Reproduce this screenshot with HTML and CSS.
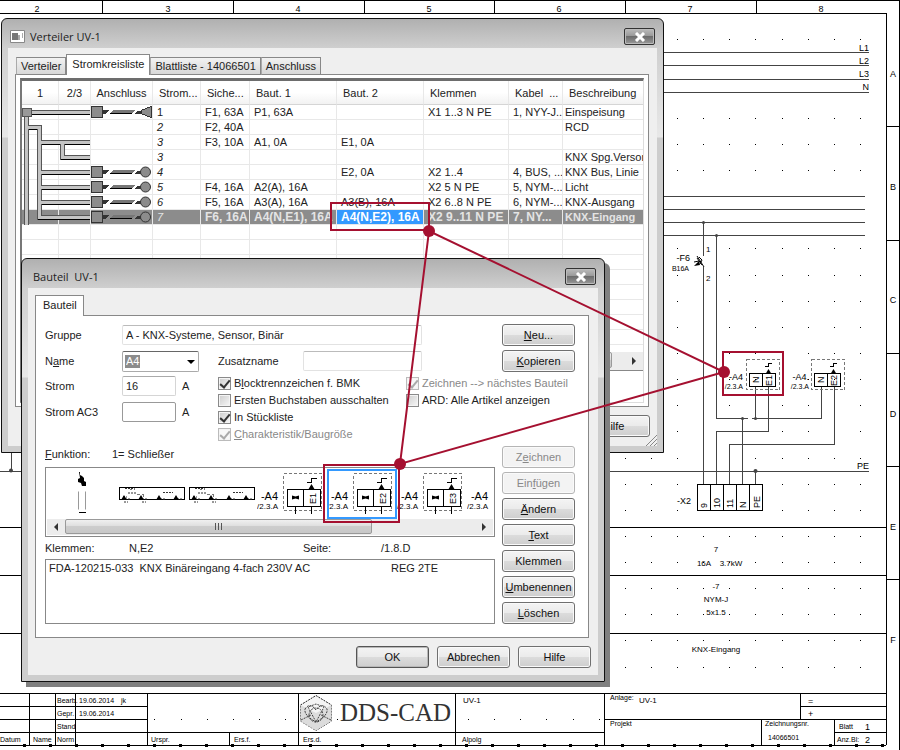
FILE: index.html
```
<!DOCTYPE html>
<html lang="de">
<head>
<meta charset="utf-8">
<title>Verteiler UV-1</title>
<link rel="stylesheet" href="styles.css">
</head>
<body>
<main class="desktop">

<svg class="drawing" viewBox="0 0 900 750" width="900" height="750" role="img" aria-label="Stromlaufplan">
  <defs>
    <path id="dots" class="dot" d="M625 0h1M651 0h1M677 0h1M703 0h1M729 0h1M755 0h1M782 0h1M808 0h1M834 0h1M860 0h1"/>
    <g id="sensor">
      <rect class="dash" x="0.5" y="0.5" width="33" height="30"/>
      <path class="ink" d="M3.5 14.5h26v13h-26zM16.500 14.500v13M19 7.500h3.500v-3h3"/>
      <path d="M22.500 10l3 5h-6z"/>
    </g>
  </defs>

  <!-- sheet frame -->
  <path class="ink" d="M0 .5H899.500V750M0 13.500H886.500V745M102.500 0V13M233.500 0V13M364.500 0V13M494.500 0V13M625.500 0V13M756.500 0V13M886 126.500H899M886 240.500H899M886 353.500H899M886 466.500H899M886 579.500H899M0 527.500H886M0 575.500H886M0 633.500H886"/>
  <g class="t9 mid">
    <text x="37" y="12">2</text><text x="168" y="12">3</text><text x="298" y="12">4</text><text x="429" y="12">5</text><text x="559" y="12">6</text><text x="690" y="12">7</text><text x="821" y="12">8</text>
    <text x="893" y="77">A</text><text x="893" y="190">B</text><text x="893" y="303">C</text><text x="893" y="417">D</text><text x="893" y="530">E</text><text x="893" y="643">F</text>
  </g>

  <!-- grid dots -->
  <use href="#dots" y="39.500"/><use href="#dots" y="118.500"/><use href="#dots" y="144.500"/><use href="#dots" y="170.500"/><use href="#dots" y="248.500"/><use href="#dots" y="275.500"/><use href="#dots" y="301.500"/><use href="#dots" y="327.500"/><use href="#dots" y="353.500"/><use href="#dots" y="379.500"/><use href="#dots" y="405.500"/><use href="#dots" y="431.500"/><use href="#dots" y="458.500"/><use href="#dots" y="484.500"/><use href="#dots" y="510.500"/><use href="#dots" y="536.500"/><use href="#dots" y="562.500"/><use href="#dots" y="588.500"/><use href="#dots" y="614.500"/><use href="#dots" y="640.500"/><use href="#dots" y="667.500"/>

  <!-- wiring -->
  <path class="wire" d="M660 52.500H869M660 65.500H869M660 79.500H869M660 92.500H869M660 196.500H865M660 209.500H865M660 222.500H865M660 235.500H865M703.500 222V256M703.500 267V484M716.500 235V418.500H748M752 418.500H821.500V387M755.500 387V418M768.500 387V431.500H716.500V484M834.500 387V444.500H729.500V484M742.500 418V484M600 471.500H869M755.500 471V484M0 471.500H22M11.500 452V471"/>
  <g class="node"><circle cx="703.500" cy="222.500" r="1.500"/><circle cx="716.500" cy="235.500" r="1.500"/><circle cx="742.500" cy="418.500" r="1.500"/><circle cx="755.500" cy="418.500" r="1.500"/><circle cx="755.500" cy="471" r="2"/><circle cx="11" cy="470.500" r="2"/></g>
  <path class="ink" d="M697.500 484.500h65v26h-65zM710.500 484v26M723.500 484v26M736.500 484v26M749.500 484v26"/>
  <path class="breaker" d="M704 267l-7-11M697 258l5 7M699 257l3 3-2 4M694 262l5-1"/><path d="M694 266l5-5 1 4z"/>
  <use href="#sensor" x="746" y="359"/><use href="#sensor" x="811" y="359"/>

  <g class="t9 end">
    <text x="869" y="51">L1</text><text x="869" y="64">L2</text><text x="869" y="77">L3</text><text x="869" y="90">N</text><text x="869" y="469">PE</text>
    <text x="690" y="261">-F6</text><text x="743" y="380">-A4</text><text x="809" y="380">-A4.</text><text x="691" y="504">-X2</text>
  </g>
  <g class="t7 end"><text x="689" y="271">B16A</text><text x="743" y="389">/2.3.A</text><text x="809" y="389">/2.3.A</text></g>
  <g class="t8"><text x="706" y="252">1</text><text x="706" y="281">2</text></g>
  <g class="t9">
    <text transform="translate(759 383) rotate(-90)">N</text><text transform="translate(772 386) rotate(-90)">E1</text>
    <text transform="translate(824 383) rotate(-90)">N</text><text transform="translate(837 386) rotate(-90)">E2</text>
    <text transform="translate(707 508) rotate(-90)">9</text><text transform="translate(720 508) rotate(-90)">10</text><text transform="translate(733 508) rotate(-90)">11</text><text transform="translate(746 508) rotate(-90)">N</text><text transform="translate(760 508) rotate(-90)">PE</text>
  </g>
  <g class="t8 mid">
    <text x="716" y="552">7</text><text x="704" y="566">16A</text><text x="731" y="566">3.7kW</text>
    <text x="716" y="589">-7</text><text x="716" y="602">NYM-J</text><text x="716" y="615">5x1.5</text><text x="716" y="652">KNX-Eingang</text>
  </g>

  <!-- title block -->
  <path class="ink" d="M0 693.500H886M0 706.500H147M0 719.500H147M604 719.500H886M0 732.500H604M834 732.500H886M800 706.500H886M0 745.500H886M29.500 693V745M55.500 693V745M75.500 693V745M147.500 693V745M229.500 732V745M298.500 693V745M455.500 693V745M604.500 693V745M800.500 693V719M761.500 719V745M834.500 719V745"/>
  <path class="ticks" d="M23 745.500H886"/>
  <path class="dot" d="M154 719.500h1M181 719.500h1M207 719.500h1M233 719.500h1M259 719.500h1M285 719.500h1M337 719.500h1M468 719.500h1M494 719.500h1M520 719.500h1M546 719.500h1M573 719.500h1M599 719.500h1"/>
  <g class="t7">
    <text x="57" y="703">Bearb.</text><text x="57" y="716">Gepr.</text><text x="57" y="729">Stand</text><text x="57" y="742">Norm</text>
    <text x="79" y="703">19.06.2014</text><text x="121" y="703">jk</text><text x="79" y="716">19.06.2014</text>
    <text x="0" y="742">Datum</text><text x="33" y="742">Name</text><text x="151" y="742">Urspr.</text><text x="234" y="742">Ers.f.</text><text x="303" y="742">Ers.d.</text><text x="462" y="742">Alpolg</text>
    <text x="610" y="700">Anlage:</text><text x="610" y="726">Projekt</text><text x="765" y="726">Zeichnungsnr.</text><text x="768" y="740">14066501</text><text x="839" y="729">Blatt</text><text x="837" y="742">Anz.Bl:</text>
  </g>
  <g class="t8"><text x="463" y="703">UV-1</text><text x="639" y="703">UV-1</text></g>
  <g class="t9"><text x="808" y="704">=</text><text x="808" y="717">+</text><text x="865" y="730">1</text><text x="865" y="743">2</text></g>
  <path class="logo-face" d="M300.500 705L316 695.500L331.500 705V721L316 730.500L300.500 721z"/>
  <path class="logo-side" d="M300.500 705L316 713V730.500L300.500 721zM331.500 705L316 713V730.500L331.500 721z"/>
  <path class="logo-line" d="M301 720l10-5M331 720l-10-5M308 707l8 15 8-15-8-3zM305 709c4-6 8-3 11 1 3-4 7-7 11-1 1 5-4 9-11 13-7-4-12-8-11-13zM309 715a7 7 0 1 0 14 0 7 7 0 1 0-14 0"/>
  <text class="brand" x="340" y="721">DDS-CAD</text>
</svg>

<section class="window win-list" aria-label="Verteiler UV-1">
  <header class="titlebar">
    <svg class="app-icon" viewBox="0 0 15 13"><path fill="#fff" stroke="#888" d="M.5.500h14v12H.5z"/><path fill="#777" d="M2 3h6v7H2z"/><path fill="#aaa" d="M8 5h2v5H8zM12 3h1v5h-1z"/></svg>
    <h1>Verteiler UV-1</h1>
    <button class="close" aria-label="Schließen"><svg viewBox="0 0 12 10"><path d="M2 1l8 8M10 1L2 9"/></svg></button>
  </header>
  <div class="client">
    <nav class="tabs">
      <button class="tab">Verteiler</button><button class="tab active">Stromkreisliste</button><button class="tab">Blattliste - 14066501</button><button class="tab">Anschluss</button>
    </nav>
    <div class="sheet">
      <div class="list">
        <div class="table-area">
          <table>
            <colgroup><col class="c1"><col class="c2"><col class="c3"><col class="c4"><col class="c5"><col class="c6"><col class="c6"><col class="c8"><col class="c9"><col></colgroup>
            <thead><tr><th class="num">1</th><th class="num">2/3</th><th class="num">Anschluss</th><th>Strom...</th><th>Siche...</th><th>Baut. 1</th><th>Baut. 2</th><th>Klemmen</th><th>Kabel  ...</th><th>Beschreibung</th></tr></thead>
            <tbody>
              <tr><td></td><td></td><td></td><td>1</td><td>F1, 63A</td><td>P1, 63A</td><td></td><td>X1 1..3 N PE</td><td>1, NYY-J...</td><td>Einspeisung</td></tr>
              <tr><td></td><td></td><td></td><td class="it">2</td><td>F2, 40A</td><td></td><td></td><td></td><td></td><td>RCD</td></tr>
              <tr><td></td><td></td><td></td><td class="it">3</td><td>F3, 10A</td><td>A1, 0A</td><td>E1, 0A</td><td></td><td></td><td></td></tr>
              <tr><td></td><td></td><td></td><td class="it">3</td><td></td><td></td><td></td><td></td><td></td><td>KNX Spg.Versor</td></tr>
              <tr><td></td><td></td><td></td><td class="it">4</td><td></td><td></td><td>E2, 0A</td><td>X2 1..4</td><td>4, BUS, ...</td><td>KNX Bus, Linie</td></tr>
              <tr><td></td><td></td><td></td><td class="it">5</td><td>F4, 16A</td><td>A2(A), 16A</td><td></td><td>X2 5 N PE</td><td>5, NYM-...</td><td>Licht</td></tr>
              <tr><td></td><td></td><td></td><td class="it">6</td><td>F5, 16A</td><td>A3(A), 16A</td><td>A3(B), 16A</td><td>X2 6..8 N PE</td><td>6, NYM-...</td><td>KNX-Ausgang</td></tr>
              <tr class="selected"><td></td><td></td><td></td><td class="it">7</td><td>F6, 16A</td><td>A4(N,E1), 16A</td><td class="focus">A4(N,E2), 16A</td><td>X2 9..11 N PE</td><td>7, NY...</td><td>KNX-Eingang</td></tr>
              <tr><td></td><td></td><td></td><td></td><td></td><td></td><td></td><td></td><td></td><td></td></tr>
              <tr><td></td><td></td><td></td><td></td><td></td><td></td><td></td><td></td><td></td><td></td></tr>
              <tr><td></td><td></td><td></td><td></td><td></td><td></td><td></td><td></td><td></td><td></td></tr>
              <tr><td></td><td></td><td></td><td></td><td></td><td></td><td></td><td></td><td></td><td></td></tr>
              <tr><td></td><td></td><td></td><td></td><td></td><td></td><td></td><td></td><td></td><td></td></tr>
              <tr><td></td><td></td><td></td><td></td><td></td><td></td><td></td><td></td><td></td><td></td></tr>
              <tr><td></td><td></td><td></td><td></td><td></td><td></td><td></td><td></td><td></td><td></td></tr>
              <tr><td></td><td></td><td></td><td></td><td></td><td></td><td></td><td></td><td></td><td></td></tr>
            </tbody>
          </table>
          <svg class="circuit" viewBox="22 105 130 120" width="130" height="120">
            <defs>
              <g id="feed"><path class="box" d="M91.500-5.500h11v11h-11z"/><path class="dark" d="M103-2h6l-3 4h-3z"/><path class="bar" d="M113-2h22l-3 3h-22z"/><path class="blk" d="M110 1h22l-1 1h-22z"/><path class="dark" d="M138-1h5v3h-9z"/></g>
              <g id="load"><use href="#feed"/><circle class="box" cx="145.500" cy="0" r="5"/></g>
            </defs>
            <g class="edge"><path d="M32 112.500H90M26.500 112V225M28 127.500H39.500V217.500H90M42 142.500H90M62.500 142V157.500H90M42 172.500H90M42 187.500H90M42 202.500H90"/></g>
            <g class="core"><path d="M32 112.500H90M26.500 112V225M28 127.500H39.500V217.500H90M40 142.500H90M62.500 142V157.500H90M40 172.500H90M40 187.500H90M40 202.500H90"/></g>
            <path class="under" d="M32 114.500H90M29 129.500H37M42 144.500H60M65 144.500H90M61 159.500H90M42 174.500H90M42 189.500H90M42 204.500H90M38 219.500H90"/>
            <path fill="#999" stroke="#555" d="M22.500 108.500h9v8h-9z"/>
            <use href="#feed" y="112"/><path class="box" d="M151 106.500v11l-10-4v-3z"/>
            <use href="#load" y="172"/><use href="#load" y="187"/><use href="#load" y="202"/><use href="#load" y="217"/>
          </svg>
        </div>
        <div class="scrollbar"><span class="arrow left"></span><span class="track"><span class="thumb wide"></span></span><span class="arrow right"></span></div>
      </div>
    </div>
    <footer class="buttons low"><button class="btn">Hilfe</button></footer>
    <svg class="grip" viewBox="0 0 12 12"><path d="M1 12L12 1M5 12l7-7M9 12l3-3"/></svg>
  </div>
</section>

<section class="window win-part" aria-label="Bauteil UV-1">
  <header class="titlebar">
    <h1>Bauteil  UV-1</h1>
    <button class="close" aria-label="Schließen"><svg viewBox="0 0 12 10"><path d="M2 1l8 8M10 1L2 9"/></svg></button>
  </header>
  <div class="client">
    <nav class="tabs"><button class="tab active">Bauteil</button></nav>
    <form class="sheet form">
      <div class="fields">
        <label for="gruppe">Gruppe</label><input id="gruppe" class="box-in soft" value="A - KNX-Systeme, Sensor, Binär">
        <label for="name">N<u>a</u>me</label>
        <div class="pair">
          <span class="combo"><select id="name"><option>A4</option></select></span>
          <label for="zusatz">Zusatzname</label><input id="zusatz" class="box-in soft grow">
        </div>
      </div>
      <div class="stack"><button type="button" class="btn"><u>N</u>eu...</button><button type="button" class="btn"><u>K</u>opieren</button></div>

      <div class="options">
        <div class="amps">
          <label for="strom">Strom</label><input id="strom" class="box-in" value="16"><span>A</span>
          <label for="ac3">Strom AC3</label><input id="ac3" class="box-in hard"><span>A</span>
        </div>
        <div class="checks">
          <label><input type="checkbox" checked><span>B<u>l</u>ocktrennzeichen f. BMK</span></label>
          <label><input type="checkbox">Ersten Buchstaben ausschalten</label>
          <label><input type="checkbox" checked>In Stückliste</label>
          <label class="off"><input type="checkbox" checked disabled><span><u>C</u>harakteristik/Baugröße</span></label>
        </div>
        <div class="checks">
          <label class="off"><input type="checkbox" checked disabled>Zeichnen --&gt; nächstes Bauteil</label>
          <label><input type="checkbox">ARD: Alle Artikel anzeigen</label>
        </div>
      </div>

      <div class="detail">
        <div class="line"><span class="k"><u>F</u>unktion:</span><span>1= Schließer</span></div>
        <div class="gallery">
          <svg width="0" height="0" class="defs"><defs>
            <g id="mod"><path class="ink" d="M2.500 18.500h65v12h-65z"/><path class="fuzz" d="M8 19.500h10M11 24h8M46 23.500h10M6 28h4M5 30h8M22 30h8M40 30h8M57 30h8M7 33h4M25 33h4"/><path class="dash" d="M17.500 18.500v2h-5M20 25.500h6v4"/><path d="M7 26l3 5H4zM24 26l3 5h-6zM42 26l3 5h-6zM59 26l3 5h-6z"/></g>
            <g id="part"><text class="tag" x="21" y="31">-A4</text><text class="ref" x="21" y="40">/2.3.A</text></g>
            <g id="bin"><use href="#part"/><path class="dash" d="M26.500 4.500h38v37h-38z"/><path class="ink" d="M30.500 20.500h33v17h-33zM46.500 20v17M38.500 37v8M54.500 37v8M50 13.500h4.500v-4h5"/><path d="M54.500 15l3.500 6h-7zM35 26.500l3.500 1L42 26.500v4l-3.500-1-3.500 1z"/></g>
          </defs></svg>
          <button type="button" class="item" aria-label="Relais"><svg viewBox="0 0 70 50"><path d="M32 3h1v3l2 1 2 2v3l2 1v4h-4l-1-3-3-1v-3l2-1z"/><path class="gray" d="M31.500 22.500v18M38.500 22.500v18"/><path class="ink" d="M32 43.500h7"/></svg></button>
          <button type="button" class="item" aria-label="Modul 1"><svg viewBox="0 0 70 50"><use href="#mod"/></svg></button>
          <button type="button" class="item" aria-label="Modul 2"><svg viewBox="0 0 70 50"><use href="#mod"/></svg></button>
          <button type="button" class="item"><svg viewBox="0 0 70 50"><use href="#bin"/><text class="rot" transform="translate(59 35) rotate(-90)">E1</text></svg></button>
          <button type="button" class="item chosen"><svg viewBox="0 0 70 50"><use href="#bin"/><text class="rot" transform="translate(59 35) rotate(-90)">E2</text></svg></button>
          <button type="button" class="item"><svg viewBox="0 0 70 50"><use href="#bin"/><text class="rot" transform="translate(59 35) rotate(-90)">E3</text></svg></button>
          <button type="button" class="item"><svg viewBox="0 0 70 50"><use href="#part"/></svg></button>
          <div class="scrollbar"><span class="arrow left"></span><span class="track"><span class="thumb"><i></i><i></i><i></i></span></span><span class="arrow right"></span></div>
        </div>
        <div class="line four"><span>Klemmen:</span><span>N,E2</span><span>Seite:</span><span>/1.8.D</span></div>
        <div class="articles"><span>FDA-120215-033  KNX Binäreingang 4-fach 230V AC</span><span>REG 2TE</span></div>
      </div>
      <div class="stack"><button type="button" class="btn" disabled>Z<u>e</u>ichnen</button><button type="button" class="btn" disabled>Ein<u>f</u>ügen</button><button type="button" class="btn"><u>Ä</u>ndern</button><button type="button" class="btn"><u>T</u>ext</button><button type="button" class="btn">Klemmen</button><button type="button" class="btn"><u>U</u>mbenennen</button><button type="button" class="btn"><u>L</u>öschen</button></div>
    </form>
    <footer class="buttons"><button class="btn default">OK</button><button class="btn">Abbrechen</button><button class="btn">Hilfe</button></footer>
  </div>
</section>

<svg class="callouts" viewBox="0 0 900 750" width="900" height="750" aria-hidden="true">
  <path class="link" d="M429 231L400 464L724 372z"/>
  <path class="frame" d="M331 203h98v27h-98zM324 465h75v57h-75zM723 352h60v43h-60z"/>
  <circle cx="429" cy="231" r="6"/><circle cx="400" cy="464" r="6"/><circle cx="724" cy="372" r="6"/>
</svg>
</main>
</body>
</html>
```
FILE: styles.css
```
* { box-sizing: border-box; }
body { margin: 0; background: #fff; color: #222; font: 11px/13px "Liberation Sans", sans-serif; }
button, input, select { font: inherit; color: inherit; margin: 0; }
.desktop { position: relative; min-height: 100vh; overflow: hidden; }
.drawing, .callouts { position: absolute; left: 0; top: 0; }

/* drawing */
.ink { fill: none; stroke: #000; shape-rendering: crispEdges; }
.wire { fill: none; stroke: #444; shape-rendering: crispEdges; }
.dash { fill: none; stroke: #777; stroke-dasharray: 3 2; shape-rendering: crispEdges; }
.dot { stroke: #000; shape-rendering: crispEdges; }
.ticks { stroke: #000; stroke-width: 3; stroke-dasharray: 3 23; }
.node { fill: #444; }
.breaker { fill: none; stroke: #000; }
.t7 { font-size: 7px; }
.t8 { font-size: 8px; }
.t9 { font-size: 9px; }
.mid { text-anchor: middle; }
.end { text-anchor: end; }
.brand { font: 25px "Liberation Serif", serif; fill: #333; }
.logo-face { fill: #f4f4f4; stroke: #222; stroke-dasharray: 2 1; }
.logo-side { fill: #dcdcdc; }
.logo-line { fill: none; stroke: #444; stroke-dasharray: 2 1; }

/* windows */
.window {
  position: absolute; display: flex; flex-direction: column; padding: 0 6px 6px;
  border: 1px solid #111; border-radius: 6px 6px 0 0;
  background: linear-gradient(#b0b0b0 0, #cfcfcf 29px, #e8e8e8 118px, #cdcdcd 119px);
}
.win-list { left: 1px; top: 18px; width: 663px; height: 435px; }
.win-part { left: 21px; top: 258px; width: 584px; height: 424px; box-shadow: 5px 5px 0 #808080; }
.titlebar { display: flex; align-items: center; height: 29px; padding: 6px 2px 0; gap: 5px; white-space: pre; background: linear-gradient(#b0b0b0, #cfcfcf); }
.win-part .titlebar { padding-left: 5px; }
.titlebar h1 { flex: 1; margin: 0; font: 11px/16px "Open Sans", sans-serif; }
.app-icon { width: 15px; height: 13px; }
.close { width: 31px; height: 17px; padding: 0; border: 1px solid #333; border-radius: 2px; background: linear-gradient(#bbb, #999 48%, #6d6d6d 50%, #999); box-shadow: inset 0 0 0 1px #bbb; display: grid; place-items: center; }
.close svg { width: 12px; height: 10px; fill: none; stroke: #fff; stroke-width: 3; }
.client { flex: 1; min-height: 0; display: flex; flex-direction: column; padding: 7px; background: #efefef; position: relative; }

.tabs { display: flex; align-items: flex-end; height: 20px; position: relative; z-index: 1; margin-bottom: -1px; }
.win-part .tabs { height: 21px; }
.tab { height: 18px; padding: 0 4px; border: 1px solid #888; border-left-color: #aaa; background: linear-gradient(#f2f2f2, #d8d8d8); line-height: 16px; white-space: nowrap; }
.tab.active { height: 21px; padding: 0 5px 3px; border-color: #888; border-bottom: 0; background: #fff; }
.win-part .tab.active { padding: 0 6px 3px 7px; }
.win-list .tabs { padding-left: 1px; }
.sheet { border: 1px solid #888; background: #fff; }
.win-list .sheet { flex: 1; min-height: 0; padding: 3px 4px; margin: 0 1px 0 0; }
.list { height: 100%; border-left: 2px solid #777; border-top: 3px solid #6d6d6d; border-right: 1px solid #ddd; border-bottom: 1px solid #ddd; }

/* circuit list */
.table-area { position: relative; height: 271px; overflow: hidden; }
table { width: 100%; table-layout: fixed; border-collapse: separate; border-spacing: 0; }
.c1 { width: 37px; } .c2 { width: 32px; } .c3 { width: 62px; } .c4 { width: 48px; } .c5 { width: 49px; } .c6 { width: 87px; } .c8 { width: 85px; } .c9 { width: 54px; }
th, td { overflow: hidden; white-space: pre; text-align: left; font-weight: normal; border-right: 1px solid #e8e8e8; padding: 0; }
th { height: 24px; padding: 1px 0 0 6px; background: linear-gradient(#fff 50%, #f2f2f2); border-bottom: 1px solid #d5d5d5; }
th.num { text-align: center; padding: 1px 0 0; }
td { height: 15px; line-height: 14px; padding-left: 4px; border-bottom: 1px solid #e8e8e8; }
th:last-child, td:last-child { border-right: 0; }
td:last-child { padding-left: 2px; }
.it { font-style: italic; }
.selected td { background: #8c8c8c; color: #e4e4e4; font-size: 12px; font-weight: bold; }
.selected .it { font-size: 11px; font-weight: normal; }
.selected td:last-child { font-size: 11px; }
.selected .focus { background: #39f; color: #fff; }
.circuit { position: absolute; left: 0; top: 24px; }
.circuit path, .circuit circle { shape-rendering: crispEdges; }
.edge { fill: none; stroke: #555; stroke-width: 5; }
.core { fill: none; stroke: #c4c4c4; stroke-width: 3; }
.under { fill: none; stroke: #000; }
.box { fill: #8c8c8c; stroke: #333; }
.circuit circle.box { shape-rendering: auto; }
.dark { fill: #333; } .bar { fill: #777; } .blk { fill: #000; }

/* scroll bars */
.scrollbar { display: flex; align-items: stretch; height: 16px; background: #ececec; }
.list .scrollbar { height: 19px; padding-bottom: 1px; border-bottom: 1px solid #888; }
.arrow { width: 18px; display: grid; place-items: center; }
.arrow::before { content: ""; border: 4px solid transparent; }
.arrow.left::before { border-right-color: #333; margin-right: 4px; }
.arrow.right::before { border-left-color: #333; margin-left: 4px; }
.track { flex: 1; display: flex; }
.thumb { width: 307px; height: 15px; border: 1px solid #999; border-radius: 2px; background: linear-gradient(#f0f0f0, #dedede 48%, #cdcdcd 50%, #c8c8c8); display: flex; justify-content: center; align-items: center; gap: 2px; }
.thumb.wide { width: calc(100% - 13px); height: 16px; }
.thumb i { width: 1px; height: 7px; background: #555; }

/* buttons */
.btn { width: 73px; height: 22px; padding: 0; border: 1px solid #707070; border-radius: 3px; background: linear-gradient(#f4f4f4, #ebebeb 48%, #dcdcdc 50%, #cecece); box-shadow: inset 0 0 0 1px #fafafa; color: #111; }
.btn:disabled { border-color: #b5b5b5; background: #f3f3f3; color: #888; }
.btn.default { border-color: #555; box-shadow: inset 0 0 0 1px #b8b8b8; }
.buttons { display: flex; justify-content: flex-end; gap: 8px; margin-top: 8px; }
.buttons.low { margin-bottom: 2px; }
.grip { position: absolute; right: 0; bottom: 0; width: 12px; height: 12px; fill: none; stroke: #888; }

/* component form */
.form { display: grid; grid-template-columns: minmax(0, 1fr) 73px; column-gap: 7px; align-content: start; margin-right: 2px; padding: 8px 13px 13px 9px; }
.stack { display: flex; flex-direction: column; gap: 4px; }
.fields { display: grid; grid-template-columns: 77px 300px; grid-auto-rows: 22px; row-gap: 4px; align-items: center; }
.pair { display: flex; align-items: center; }
.pair label { width: 104px; padding-left: 19px; }
.grow { flex: 1; min-width: 0; }
.box-in { height: 20px; width: 100%; border: 1px solid #d5d5d5; border-top-color: #aaa; border-radius: 2px; padding: 0 3px; background: #fff; outline: 0; }
.box-in.soft { border-color: #bbb #e2e2e2 #e2e2e2; }
.box-in.hard { border-color: #999; }
.combo { position: relative; width: 77px; }
.combo select { appearance: none; display: block; width: 77px; height: 21px; border: 1px solid #aaa; border-top-color: #666; border-radius: 2px; padding: 0 3px; color: #fff; background: linear-gradient(#8c8c8c, #8c8c8c) 2px 3px / 15px 13px no-repeat #fff; outline: 0; }
.combo::after { content: ""; position: absolute; right: 4px; top: 9px; border: 4px solid transparent; border-top-color: #000; border-bottom: 0; pointer-events: none; }
.options { grid-column: 1 / -1; display: grid; grid-template-columns: 173px 188px 1fr; height: 74px; padding-top: 4px; }
.amps { display: grid; grid-template-columns: 77px 54px 1fr; grid-auto-rows: 20px; row-gap: 6px; align-items: center; align-content: start; }
.amps span { padding-left: 6px; }
.checks { display: flex; flex-direction: column; gap: 4px; padding-top: 1px; white-space: nowrap; }
.checks label { display: flex; align-items: center; height: 13px; }
.checks input { appearance: none; width: 13px; height: 13px; margin-right: 3px; border: 1px solid #8a8a8a; background: linear-gradient(135deg, #ccc, #f8f8f8); box-shadow: inset 0 0 0 1px #f4f4f4; display: grid; place-items: center; }
.checks input:checked::before { content: ""; width: 4px; height: 8px; margin-top: -2px; border: solid #333; border-width: 0 2px 2px 0; transform: rotate(40deg); }
.off { color: #888; }
.checks input:disabled { border-color: #bbb; background: #f8f8f8; }
.checks input:disabled::before { border-color: #aaa; }
.line { display: flex; height: 21px; align-items: center; padding-bottom: 5px; }
.line .k { width: 67px; }
.four { display: grid; grid-template-columns: 84px 174px 78px 1fr; height: 22px; padding: 0; }
.gallery { position: relative; display: grid; grid-template-columns: repeat(7, 70px); grid-template-rows: 50px 16px; overflow: hidden; height: 70px; padding: 1px; border: 1px solid #888; background: #fff; }
.defs { position: absolute; }
.item { width: 70px; height: 50px; padding: 0; border: 0; background: none; position: relative; }
.item svg { display: block; width: 70px; height: 50px; }
.item.chosen { outline: 2px solid #39f; outline-offset: -2px; }
.gallery .scrollbar { grid-column: 1 / -1; width: 446px; }
.gray { stroke: #999; }
.fuzz { fill: none; stroke: #333; stroke-dasharray: 2 1; }
.tag { font-size: 11px; text-anchor: end; }
.ref { font-size: 8px; text-anchor: end; }
.rot { font-size: 9px; }
.articles { display: grid; grid-template-columns: 342px 1fr; height: 65px; padding: 2px 3px; border: 1px solid #888; white-space: pre; }

/* callouts */
.callouts { pointer-events: none; fill: #a51030; }
.link, .frame { fill: none; stroke: #a51030; stroke-width: 2; }
```
